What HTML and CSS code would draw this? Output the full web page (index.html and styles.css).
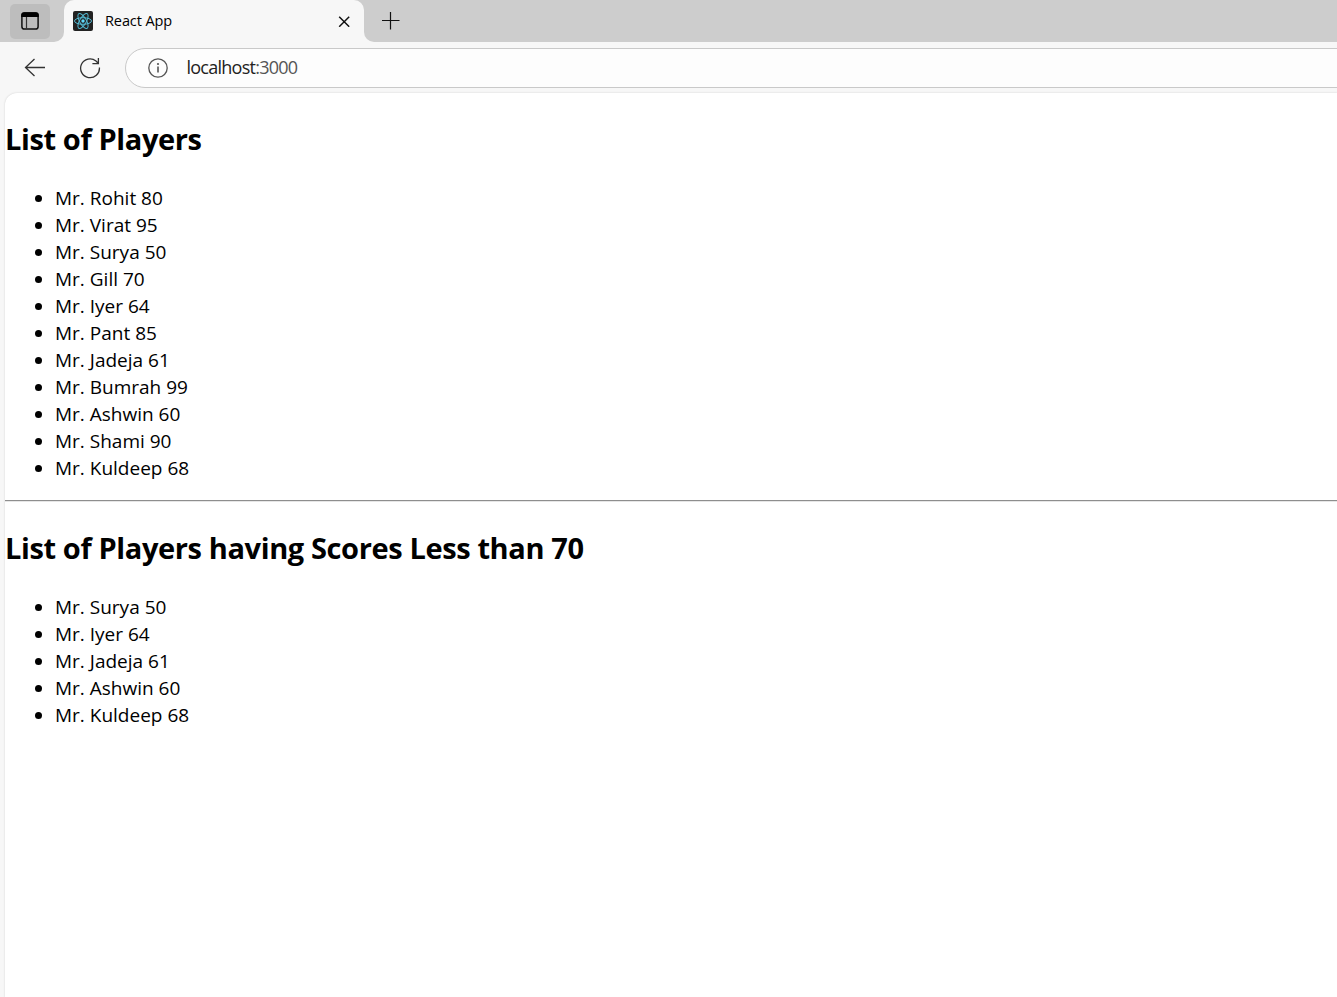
FILE: index.html
```html
<!DOCTYPE html>
<html lang="en">
<head>
<meta charset="utf-8">
<title>React App</title>
<link rel="stylesheet" href="styles.css">
</head>
<body>
<div class="tabstrip">
  <div class="strip-left">
    <button class="workspace" aria-label="Tab actions">
      <svg width="20" height="20" viewBox="0 0 20 20"><rect x="1.9" y="1.9" width="16.2" height="16.2" rx="2.6" fill="none" stroke="#111" stroke-width="1.5"/><path d="M1.2 6V4.2a3 3 0 0 1 3-3h11.6a3 3 0 0 1 3 3V6z" fill="#000"/><path d="M6.5 6v12" stroke="#333" stroke-width="1.2"/></svg>
    </button>
  </div>
  <div class="tab">
    <svg class="favicon" width="20" height="20" viewBox="0 0 20 20"><rect width="20" height="20" rx="2" fill="#222"/><g fill="none" stroke="#53b9d2" stroke-width="1"><ellipse cx="10" cy="10" rx="8.5" ry="3.3"/><ellipse cx="10" cy="10" rx="8.5" ry="3.3" transform="rotate(60 10 10)"/><ellipse cx="10" cy="10" rx="8.5" ry="3.3" transform="rotate(120 10 10)"/></g><circle cx="10" cy="10" r="1.7" fill="#61dafb"/></svg>
    <span class="tab-title">React App</span>
    <svg class="close" width="12" height="12" viewBox="0 0 12 12"><path d="M1.2 1.7l10 10M11.2 1.7l-10 10" stroke="#111" stroke-width="1.5"/></svg>
  </div>
  <div class="strip-right">
    <svg width="18" height="18" viewBox="0 0 18 18"><path d="M0 8.5h17.5M8.5 0v17.5" stroke="#111" stroke-width="1.2"/></svg>
  </div>
</div>
<div class="toolbar">
  <svg class="back" width="22" height="20" viewBox="0 0 22 20"><path d="M21 9.5H1.5M10.5 1L1.5 9.5l9 8.5" fill="none" stroke="#333" stroke-width="1.3"/></svg>
  <svg class="reload" width="22" height="22" viewBox="0 0 22 22"><path d="M20.4 10.5A9.4 9.4 0 1 1 17 4l2.2 2.3M19.4 1v5.7h-6" fill="none" stroke="#333" stroke-width="1.3"/></svg>
  <div class="address">
    <svg width="20" height="20" viewBox="0 0 20 20"><circle cx="10" cy="10" r="9.2" fill="none" stroke="#555" stroke-width="1.3"/><path d="M10 8.5v6" stroke="#555" stroke-width="1.6"/><circle cx="10" cy="6" r="1.1" fill="#555"/></svg>
    <span class="url">localhost<span class="port">:3000</span></span>
  </div>
</div>
<main class="page">
  <h2 class="heading">List of Players</h2>
  <ul class="players">
    <li>Mr. Rohit 80</li>
    <li>Mr. Virat 95</li>
    <li>Mr. Surya 50</li>
    <li>Mr. Gill 70</li>
    <li>Mr. Iyer 64</li>
    <li>Mr. Pant 85</li>
    <li>Mr. Jadeja 61</li>
    <li>Mr. Bumrah 99</li>
    <li>Mr. Ashwin 60</li>
    <li>Mr. Shami 90</li>
    <li>Mr. Kuldeep 68</li>
  </ul>
  <hr class="divider">
  <h2 class="heading">List of Players having Scores Less than 70</h2>
  <ul class="players">
    <li>Mr. Surya 50</li>
    <li>Mr. Iyer 64</li>
    <li>Mr. Jadeja 61</li>
    <li>Mr. Ashwin 60</li>
    <li>Mr. Kuldeep 68</li>
  </ul>
</main>
</body>
</html>
```

FILE: styles.css
```css
* { box-sizing: border-box; }
html, body { height: 100%; }
body {
  margin: 0;
  display: flex;
  flex-direction: column;
  overflow: hidden;
  background: #f7f7f7;
  color: #000;
  font-family: "Open Sans", "Noto Sans", sans-serif;
}
svg { display: block; flex: none; }
.tabstrip { display: flex; height: 42px; flex: none; }
.strip-left {
  width: 64px;
  padding: 4px 0 0 10px;
  background: #cdcdcd;
  border-bottom-right-radius: 10px;
}
.workspace {
  display: flex;
  align-items: center;
  justify-content: center;
  width: 40px;
  height: 35px;
  padding: 0 0 1px;
  border: 0;
  border-radius: 5px;
  background: #bdbdbd;
}
.tab {
  display: flex;
  align-items: center;
  width: 300px;
  padding: 0 14px 0 9px;
  background: linear-gradient(#cdcdcd, #cdcdcd) top / 100% 12px no-repeat;
  position: relative;
  z-index: 0;
}
.tab::before {
  content: "";
  position: absolute;
  inset: 0;
  z-index: -1;
  border-radius: 10px 10px 0 0;
  background: #f7f7f7;
}
.tab-title {
  flex: 1;
  margin-left: 12px;
  font-size: 14.5px;
  letter-spacing: -0.1px;
  line-height: 20px;
}
.strip-right {
  flex: 1;
  padding: 12px 0 0 18px;
  background: #cdcdcd;
  border-bottom-left-radius: 10px;
}
.toolbar {
  display: flex;
  align-items: center;
  flex: none;
  height: 51px;
  padding-left: 24px;
}
.reload { margin-left: 33px; }
.address {
  display: flex;
  align-items: center;
  flex: 1;
  height: 40px;
  margin: 1px -30px 0 24px;
  padding-left: 22px;
  border: 1px solid #c9c9c9;
  border-radius: 20px;
  background: #fdfdfd;
}
.url {
  margin: 0 0 2px 18.5px;
  font-size: 18px;
  line-height: 24px;
  letter-spacing: -0.75px;
  color: #222;
}
.port { color: #555; }
.page {
  flex: 1;
  margin-left: 5px;
  border-top-left-radius: 12px;
  background: #fff;
  box-shadow: 0 0 2px #ccc;
}
.heading {
  margin: 0;
  padding-top: 26px;
  font-size: 29px;
  line-height: 40px;
  font-weight: 700;
  letter-spacing: -0.38px;
}
.players {
  margin: 26px 0 0;
  padding-left: 50px;
  font-size: 19px;
  line-height: 27px;
}
.divider {
  height: 2px;
  margin: 18px 0 0;
  border: 0;
  border-top: 1px solid #8e8e8e;
  border-bottom: 1px solid #e6e6e6;
}
```
